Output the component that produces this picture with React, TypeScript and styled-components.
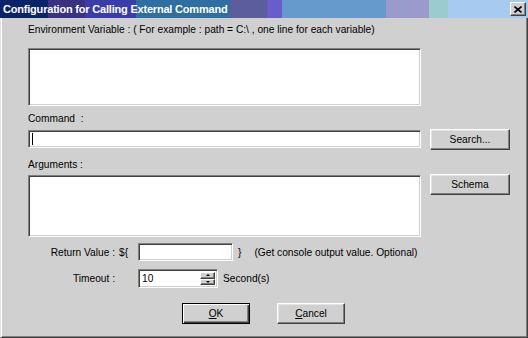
import React from "react";
import styled, { createGlobalStyle } from "styled-components";

const GlobalStyle = createGlobalStyle`
  html, body {
    margin: 0;
    padding: 0;
    background: #d0d0d0;
  }
  body {
    font-family: "Liberation Sans", Arial, sans-serif;
    font-size: 10.2px;
    color: #000;
  }
`;

const Window = styled.div`
  width: 528px;
  height: 338px;
  display: flex;
  flex-direction: column;
  background: #d0d0d0;
  overflow: hidden;
`;

const TitleBar = styled.div`
  height: 18px;
  flex: none;
  display: flex;
  align-items: center;
  justify-content: space-between;
  padding: 0 2px 0 3px;
  background: linear-gradient(
    to right,
    #0a246a 0 48px,
    #3a3182 48px 85px,
    #3b3cab 85px 136px,
    #2f6ea0 136px 230px,
    #5c5e9c 230px 267px,
    #6a5ccb 267px 282px,
    #6699cc 282px 386px,
    #9a9acc 386px 429px,
    #99cccc 429px 448px,
    #a6caf0 448px
  );
`;

const Title = styled.span`
  color: #fff;
  font-weight: bold;
  font-size: 11px;
  letter-spacing: -0.2px;
`;

const CloseButton = styled.button`
  width: 16px;
  height: 14px;
  padding: 0;
  display: flex;
  align-items: center;
  justify-content: center;
  background: #d0d0d0;
  border: 1px solid;
  border-color: #fff #404040 #404040 #fff;
  box-shadow: inset -1px -1px #808080;
`;

const Body = styled.div`
  flex: 1;
  display: flex;
  flex-direction: column;
  padding: 5px 0 0 27px;
  border-left: 1px solid #e4e4e4;
  border-right: 1px solid #404040;
  border-bottom: 1px solid #404040;
  box-shadow: inset 1px 0 #fff, inset -1px -1px #808080;
`;

const Label = styled.div<{ $gap?: number }>`
  height: 13px;
  line-height: 13px;
  margin-top: ${(p) => p.$gap ?? 0}px;
`;

const Row = styled.div<{ $gap: number }>`
  display: flex;
  align-items: flex-start;
  gap: 9px;
  margin-top: ${(p) => p.$gap}px;
`;

const sunken = `
  box-sizing: border-box;
  border: 1px solid;
  border-color: #808080 #fff #fff #808080;
  box-shadow: inset 1px 1px #404040, inset -1px -1px #d0d0d0;
  background: #fff;
  font-family: "Liberation Sans", Arial, sans-serif;
  font-size: 10.2px;
  outline: none;
`;

const TextArea = styled.textarea<{ $h: number }>`
  ${sunken}
  width: 393px;
  height: ${(p) => p.$h}px;
  resize: none;
  overflow: hidden;
  margin: 0;
  padding: 2px;
`;

const LineField = styled.div<{ $w: number; $h?: number }>`
  ${sunken}
  width: ${(p) => p.$w}px;
  height: ${(p) => p.$h ?? 18}px;
  display: flex;
  align-items: center;
  padding: 0 3px;
  position: relative;
`;

const Caret = styled.span`
  width: 1px;
  height: 12px;
  background: #000;
`;

const Button = styled.button<{ $w: number; $default?: boolean }>`
  box-sizing: border-box;
  width: ${(p) => p.$w}px;
  height: 21px;
  padding: 0;
  background: #d0d0d0;
  font-family: "Liberation Sans", Arial, sans-serif;
  font-size: 10.2px;
  color: #000;
  border: 1px solid;
  border-color: ${(p) => (p.$default ? "#000" : "#fff #404040 #404040 #fff")};
  box-shadow: ${(p) =>
    p.$default
      ? "inset 1px 1px #fff, inset -1px -1px #404040, inset -2px -2px #808080"
      : "inset -1px -1px #808080, inset 1px 1px #e4e4e4"};
`;

const FormRow = styled.div<{ $gap: number }>`
  display: flex;
  align-items: center;
  margin-top: ${(p) => p.$gap}px;
`;

const RightLabel = styled.span`
  width: 87px;
  text-align: right;
  flex: none;
`;

const Dollar = styled.span`
  width: 19px;
  margin-left: 4px;
  flex: none;
`;

const Spacer = styled.span`
  width: 23px;
  flex: none;
`;

const Brace = styled.span`
  margin-left: 5px;
`;

const Hint = styled.span<{ $ml: number }>`
  margin-left: ${(p) => p.$ml}px;
`;

const SpinBox = styled.div`
  display: flex;
  flex-direction: column;
  position: absolute;
  right: 2px;
  top: 2px;
  bottom: 2px;
`;

const SpinButton = styled.div`
  box-sizing: border-box;
  width: 15px;
  flex: 1;
  display: flex;
  align-items: center;
  justify-content: center;
  background: #d0d0d0;
  border: 1px solid;
  border-color: #fff #404040 #404040 #fff;
  box-shadow: inset -1px -1px #808080;
`;

const Arrow = styled.span<{ $up?: boolean }>`
  width: 0;
  height: 0;
  border-left: 2px solid transparent;
  border-right: 2px solid transparent;
  ${(p) => (p.$up ? "border-bottom: 2px solid #000;" : "border-top: 2px solid #000;")}
`;

const ActionRow = styled.div`
  display: flex;
  gap: 27px;
  margin-top: 15px;
  padding-left: 154px;
`;

const U = styled.span`
  text-decoration: underline;
`;

export default function App() {
  return (
    <>
      <GlobalStyle />
      <Window>
        <TitleBar>
          <Title>Configuration for Calling External Command</Title>
          <CloseButton aria-label="Close">
            <svg width="8" height="7" viewBox="0 0 8 7">
              <path d="M0.5 0.5 L7.5 6.5 M7.5 0.5 L0.5 6.5" stroke="#000" strokeWidth="1.6" />
            </svg>
          </CloseButton>
        </TitleBar>
        <Body>
          <Label>
            Environment Variable : ( For example : path = C:\ , one line for each variable)
          </Label>
          <Row $gap={12}>
            <TextArea $h={58} />
          </Row>
          <Label $gap={6}>Command&nbsp; :</Label>
          <Row $gap={4}>
            <LineField $w={393} style={{ marginTop: 1 }}>
              <Caret />
            </LineField>
            <Button $w={80}>Search...</Button>
          </Row>
          <Label $gap={8}>Arguments :</Label>
          <Row $gap={3}>
            <TextArea $h={62} style={{ marginTop: 1 }} />
            <Button $w={80}>Schema</Button>
          </Row>
          <FormRow $gap={6}>
            <RightLabel>Return Value :</RightLabel>
            <Dollar>${"{"}</Dollar>
            <LineField $w={95} />
            <Brace>{"}"}</Brace>
            <Hint $ml={13}>(Get console output value. Optional)</Hint>
          </FormRow>
          <FormRow $gap={8}>
            <RightLabel>Timeout :</RightLabel>
            <Spacer />
            <LineField $w={80} $h={19}>
              10
              <SpinBox>
                <SpinButton>
                  <Arrow $up />
                </SpinButton>
                <SpinButton>
                  <Arrow />
                </SpinButton>
              </SpinBox>
            </LineField>
            <Hint $ml={5}>Second(s)</Hint>
          </FormRow>
          <ActionRow>
            <Button $w={68} $default>
              <U>O</U>K
            </Button>
            <Button $w={68}>
              <U>C</U>ancel
            </Button>
          </ActionRow>
        </Body>
      </Window>
    </>
  );
}
